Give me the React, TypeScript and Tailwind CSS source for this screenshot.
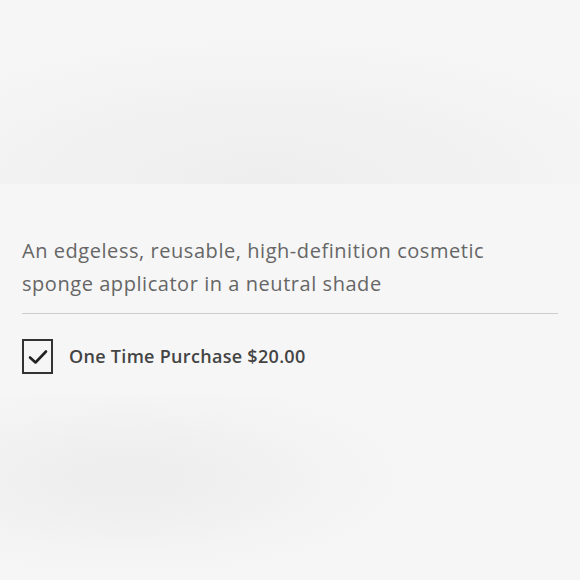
export default function App() {
  return (
    <div className="flex h-[580px] w-[580px] flex-col bg-[#f6f6f6] font-['Open_Sans','Liberation_Sans',sans-serif]">
      <div className="h-[184px] w-full bg-[radial-gradient(ellipse_95%_110%_at_45%_100%,#eeeeee_0%,#f2f2f2_45%,#f6f6f6_75%)]" />
      <div className="flex h-[211px] flex-col px-[22px] pt-[50px]">
        <p className="text-[20px] leading-[33px] tracking-[0.55px] text-[#666666]">
          An edgeless, reusable, high-definition cosmetic
          <br />
          sponge applicator in a neutral shade
        </p>
        <div className="mt-[13px] h-px w-full bg-[#cccccc]" />
        <label className="mt-[25px] flex items-center gap-[16px]">
          <span className="flex h-[35px] w-[31px] items-center justify-center border-2 border-[#333333]">
            <svg width="20" height="16" viewBox="0 0 20 16" fill="none">
              <path d="M2 8.5 L7.5 13.5 L18 2.5" stroke="#222222" strokeWidth="2.6" strokeLinecap="round" strokeLinejoin="round" />
            </svg>
          </span>
          <span className="text-[18px] font-semibold tracking-[0.3px] text-[#444444]">One Time Purchase $20.00</span>
        </label>
      </div>
      <div className="flex-1 bg-[radial-gradient(ellipse_50%_55%_at_22%_45%,#ededed_0%,#f0f0f0_40%,#f4f4f4_75%,#f6f6f6_100%)]" />
    </div>
  );
}
